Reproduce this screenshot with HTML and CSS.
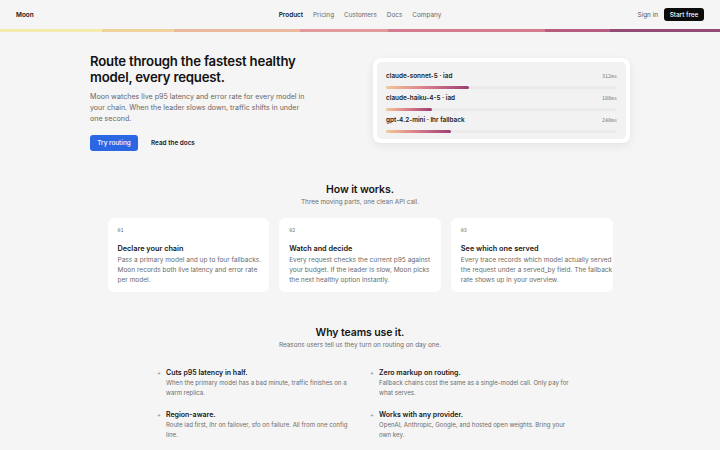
FILE: index.html
```html
<!DOCTYPE html>
<html lang="en">
<head>
<meta charset="utf-8">
<title>Moon</title>
<link rel="stylesheet" href="styles.css">
</head>
<body>
<header class="topbar">
  <div class="brand">Moon</div>
  <nav class="nav">
    <a class="nav-link active">Product</a>
    <a class="nav-link">Pricing</a>
    <a class="nav-link">Customers</a>
    <a class="nav-link">Docs</a>
    <a class="nav-link">Company</a>
  </nav>
  <div class="actions">
    <a class="signin">Sign in</a>
    <a class="btn-dark">Start free</a>
  </div>
</header>
<div class="stripe">
  <span class="seg s1"></span><span class="seg s2"></span><span class="seg s3"></span><span class="seg s4"></span><span class="seg s5"></span><span class="seg s6"></span><span class="seg s7"></span>
</div>

<section class="hero">
  <div class="hero-copy">
    <h1 class="hero-title">Route through the fastest healthy model, every request.</h1>
    <p class="hero-text">Moon watches live p95 latency and error rate for every model in your chain. When the leader slows down, traffic shifts in under one second.</p>
    <div class="hero-ctas">
      <a class="btn-blue">Try routing</a>
      <a class="btn-link">Read the docs</a>
    </div>
  </div>
  <div class="panel">
    <div class="panel-inner">
      <div class="route">
        <div class="route-head"><span class="route-name">claude-sonnet-5 · iad</span><span class="route-ms">312ms</span></div>
        <div class="track"><div class="bar" style="width:36%"></div></div>
      </div>
      <div class="route">
        <div class="route-head"><span class="route-name">claude-haiku-4-5 · iad</span><span class="route-ms">188ms</span></div>
        <div class="track"><div class="bar" style="width:20%"></div></div>
      </div>
      <div class="route">
        <div class="route-head"><span class="route-name">gpt-4.2-mini · lhr fallback</span><span class="route-ms">248ms</span></div>
        <div class="track"><div class="bar" style="width:28%"></div></div>
      </div>
    </div>
  </div>
</section>

<section class="how">
  <h2 class="section-title">How it works.</h2>
  <p class="section-sub">Three moving parts, one clean API call.</p>
  <div class="steps">
    <div class="step">
      <div class="step-num">01</div>
      <h3 class="step-title">Declare your chain</h3>
      <p class="step-text">Pass a primary model and up to four fallbacks. Moon records both live latency and error rate per model.</p>
    </div>
    <div class="step">
      <div class="step-num">02</div>
      <h3 class="step-title">Watch and decide</h3>
      <p class="step-text">Every request checks the current p95 against your budget. If the leader is slow, Moon picks the next healthy option instantly.</p>
    </div>
    <div class="step">
      <div class="step-num">03</div>
      <h3 class="step-title">See which one served</h3>
      <p class="step-text">Every trace records which model actually served the request under a served_by field. The fallback rate shows up in your overview.</p>
    </div>
  </div>
</section>

<section class="why">
  <h2 class="section-title">Why teams use it.</h2>
  <p class="section-sub">Reasons users tell us they turn on routing on day one.</p>
  <div class="features">
    <div class="feature">
      <span class="plus">+</span>
      <div>
        <h4 class="feature-title">Cuts p95 latency in half.</h4>
        <p class="feature-text">When the primary model has a bad minute, traffic finishes on a warm replica.</p>
      </div>
    </div>
    <div class="feature">
      <span class="plus">+</span>
      <div>
        <h4 class="feature-title">Zero markup on routing.</h4>
        <p class="feature-text">Fallback chains cost the same as a single-model call. Only pay for what serves.</p>
      </div>
    </div>
    <div class="feature">
      <span class="plus">+</span>
      <div>
        <h4 class="feature-title">Region-aware.</h4>
        <p class="feature-text">Route iad first, lhr on failover, sfo on failure. All from one config line.</p>
      </div>
    </div>
    <div class="feature">
      <span class="plus">+</span>
      <div>
        <h4 class="feature-title">Works with any provider.</h4>
        <p class="feature-text">OpenAI, Anthropic, Google, and hosted open weights. Bring your own key.</p>
      </div>
    </div>
  </div>
</section>
</body>
</html>
```

FILE: styles.css
```css
* { box-sizing: border-box; }
html, body { margin: 0; padding: 0; }
body {
  background: #f6f5f5;
  font-family: Inter, "Noto Sans", sans-serif;
  color: #161616;
  width: 720px;
  height: 450px;
  overflow: hidden;
}
a { text-decoration: none; color: inherit; }
h1, h2, h3, h4, p { margin: 0; }

.topbar {
  height: 29px;
  display: grid;
  grid-template-columns: 1fr auto 1fr;
  align-items: center;
  padding: 0 16px;
  font-size: 6.4px;
}
.brand { font-weight: 600; color: #111; }
.nav { display: flex; gap: 10px; }
.nav-link { color: #6a6a6a; }
.nav-link.active { color: #1a1a1a; font-weight: 600; }
.actions { display: flex; justify-content: flex-end; align-items: center; gap: 6px; }
.signin { color: #555; }
.btn-dark {
  background: #0c0c0c;
  color: #fff;
  border-radius: 3px;
  width: 40px;
  height: 13px;
  display: flex;
  align-items: center;
  justify-content: center;
  font-weight: 500;
}

.stripe { display: flex; height: 3px; }
.seg { display: block; height: 100%; }
.s1 { width: 102px; background: #f4ebab; }
.s2 { width: 72px; background: #f0d29c; }
.s3 { width: 126px; background: #ecb89e; }
.s4 { width: 88px; background: #e09a9c; }
.s5 { width: 157px; background: #d47c8f; }
.s6 { width: 65px; background: #b75c7e; }
.s7 { flex: 1; background: #934a75; }

.hero {
  width: 540px;
  margin: 0 auto;
  padding-top: 21px;
  display: flex;
  justify-content: space-between;
  align-items: flex-start;
}
.hero-copy { width: 218px; }
.hero-title {
  font-size: 13.2px;
  line-height: 16px;
  font-weight: 600;
  letter-spacing: -0.2px;
  color: #121212;
}
.hero-text {
  width: 215px;
  margin-top: 6px;
  font-size: 7.1px;
  line-height: 11px;
  color: #666;
}
.hero-ctas { display: flex; align-items: center; gap: 13px; margin-top: 11px; }
.btn-blue {
  background: #2b67e3;
  color: #fff;
  font-size: 6.4px;
  font-weight: 500;
  border-radius: 3px;
  width: 48px;
  height: 16px;
  display: flex;
  align-items: center;
  justify-content: center;
}
.btn-link { font-size: 6.4px; font-weight: 600; color: #1c1c1c; }

.panel {
  margin-top: 5px;
  width: 257px;
  background: #fff;
  border-radius: 7px;
  padding: 4px;
  box-shadow: 0 3px 10px rgba(0,0,0,0.07), 0 0 1px rgba(0,0,0,0.06);
}
.panel-inner {
  background: #f3f2f2;
  border-radius: 5px;
  padding: 10px 9px 6px;
  display: flex;
  flex-direction: column;
  gap: 5px;
}
.route-head { display: flex; justify-content: space-between; align-items: center; }
.route-name { font-size: 6.4px; font-weight: 600; color: #222; }
.route-ms { font-family: "DejaVu Sans Mono", monospace; font-size: 5px; color: #777; }
.track { margin-top: 6px; height: 3px; border-radius: 2px; background: #ebeaea; }
.bar { height: 100%; border-radius: 2px; background: linear-gradient(90deg, #f3c896, #d77a8b 50%, #9a3f73); }

.how { margin-top: 32px; text-align: center; }
.section-title { font-size: 10.5px; font-weight: 600; color: #151515; letter-spacing: -0.1px; }
.section-sub { margin-top: 2px; font-size: 6.4px; color: #6e6e6e; }
.steps {
  width: 505px;
  margin: 12px auto 0;
  display: grid;
  grid-template-columns: repeat(3, 1fr);
  gap: 10px;
  text-align: left;
}
.step {
  background: #fff;
  border-radius: 6px;
  padding: 9px 0 10px 10px;
  height: 74px;
}
.step-num { font-family: "DejaVu Sans Mono", monospace; font-size: 5px; color: #666; }
.step-title { margin-top: 11px; font-size: 7.3px; font-weight: 600; color: #161616; }
.step-text { margin-top: 2px; font-size: 6.55px; line-height: 10px; color: #6b6b6b; }

.why { margin-top: 34px; text-align: center; }
.features {
  margin: 19px 0 0 157px;
  display: grid;
  grid-template-columns: 201px 200px;
  column-gap: 12px;
  row-gap: 13px;
  text-align: left;
}
.feature { display: flex; gap: 5px; }
.plus { font-size: 6px; color: #888; line-height: 9px; }
.feature-title { font-size: 7px; font-weight: 600; color: #161616; line-height: 9px; }
.feature-text { margin-top: 1px; font-size: 6.1px; line-height: 9.5px; color: #6b6b6b; }
```
